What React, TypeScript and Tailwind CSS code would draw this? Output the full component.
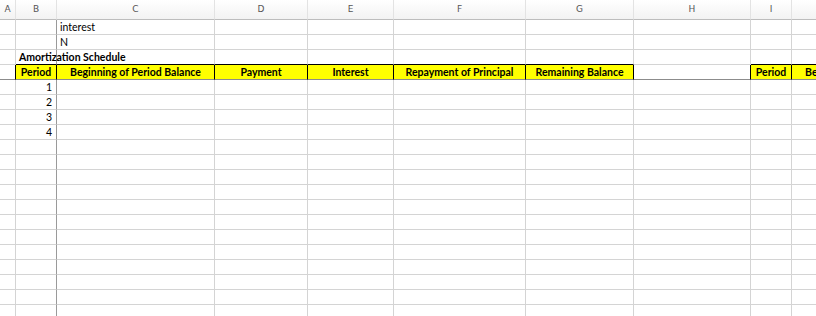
import React from "react";

type Cell = {
  text?: string;
  bold?: boolean;
  align?: "left" | "center" | "right";
  fill?: boolean;
  overflow?: boolean;
};

const letters = ["A", "B", "C", "D", "E", "F", "G", "H", "I", ""];

// fixed column widths (border included), last one just runs off the edge
const colClass =
  "grid grid-cols-[16px_41px_158px_93px_86px_132px_108px_117px_41px_158px]";

const headings = [
  "Period",
  "Beginning of Period Balance",
  "Payment",
  "Interest",
  "Repayment of Principal",
  "Remaining Balance",
];

function buildRows(): Cell[][] {
  const rows: Cell[][] = [];
  for (let r = 1; r <= 20; r++) {
    const row: Cell[] = Array.from({ length: 10 }, () => ({}));
    if (r === 1) row[2] = { text: "interest" };
    if (r === 2) row[2] = { text: "N" };
    if (r === 3) row[1] = { text: "Amortization Schedule", bold: true, overflow: true };
    if (r === 4) {
      headings.forEach((h, i) => {
        row[i + 1] = { text: h, bold: true, align: "center", fill: true };
      });
      row[8] = { text: "Period", bold: true, align: "center", fill: true };
      row[9] = { text: "Beginning of Period Balance", bold: true, align: "center", fill: true };
    }
    if (r >= 5 && r <= 8) row[1] = { text: String(r - 4), align: "right" };
    rows.push(row);
  }
  return rows;
}

const yellowCols = [1, 2, 3, 4, 5, 6, 8, 9];

export default function App() {
  const rows = buildRows();

  return (
    <div className="w-[816px] h-[316px] overflow-hidden bg-white font-['Lato','Open_Sans',sans-serif] text-[10.5px] text-black">
      {/* column letters */}
      <div className={`${colClass} h-[20px] bg-gradient-to-b from-white to-[#f2f2f2]`}>
        {letters.map((l, i) => (
          <div
            key={i}
            className={`h-[20px] border-b border-b-[#bdbdbd] border-r ${
              i === 9 ? "border-r-transparent" : "border-r-[#e3e3e3]"
            } flex items-center justify-center font-['DejaVu_Sans',sans-serif] text-[9px] text-[#555]`}
          >
            {l}
          </div>
        ))}
      </div>

      {rows.map((row, r) => {
        const rowNo = r + 1;
        return (
          <div key={r} className={`${colClass} h-[15px]`}>
            {row.map((cell, c) => {
              // grid line colours: frozen panes after column B and row 4
              let right = "border-r-[#d4d4d4]";
              if (c === 1) right = "border-r-[#9a9a9a]";
              if (rowNo === 4 && c <= 8) right = "border-r-black";

              let bottom = "border-b-[#d4d4d4]";
              if (rowNo === 3 && yellowCols.includes(c)) bottom = "border-b-black";
              if (rowNo === 4) bottom = "border-b-[#8c8c8c]";

              const align =
                cell.align === "center"
                  ? "justify-center"
                  : cell.align === "right"
                  ? "justify-end pr-[4px]"
                  : "justify-start pl-[3px]";

              return (
                <div
                  key={c}
                  className={`relative h-[15px] border-r border-b ${right} ${bottom} ${
                    cell.fill ? "bg-[#ffff00]" : ""
                  } flex items-end pb-[1px] ${align} whitespace-nowrap ${
                    cell.overflow ? "overflow-visible z-10" : "overflow-hidden"
                  } ${cell.bold ? "font-bold" : ""} leading-[12px]`}
                >
                  {cell.text}
                </div>
              );
            })}
          </div>
        );
      })}
    </div>
  );
}
